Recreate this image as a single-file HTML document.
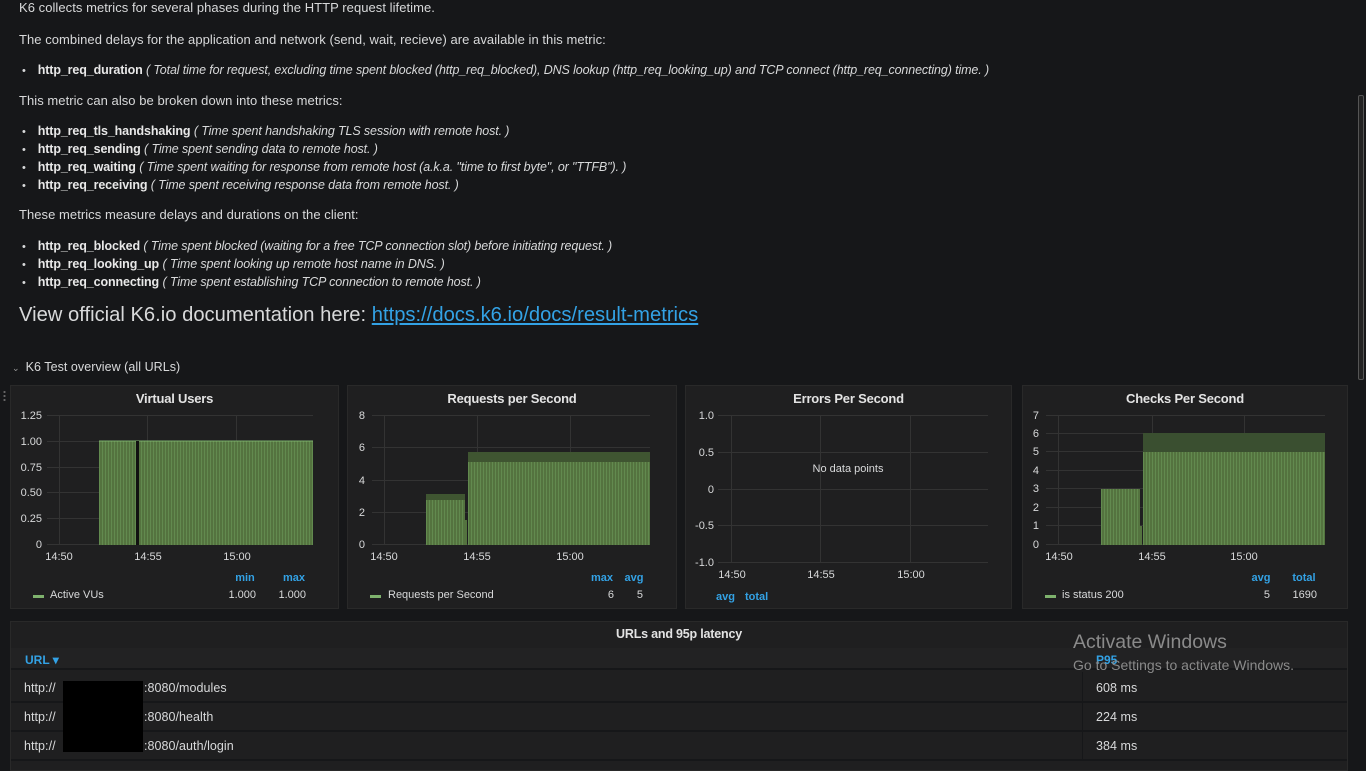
<!DOCTYPE html>
<html><head><meta charset="utf-8"><style>
*{margin:0;padding:0;box-sizing:border-box}
body{width:1366px;height:768px;background:#161719;overflow:hidden;position:relative;font-family:"Liberation Sans",sans-serif;color:#d8d9da;font-size:13px}
.t{position:absolute;left:19px;white-space:nowrap;font-size:13px;letter-spacing:0.05px;line-height:16px}
.li{position:absolute;left:22px;white-space:nowrap;font-size:12.5px;letter-spacing:-0.12px;line-height:16px}
.li:before{content:"•";margin-right:12px;font-size:11px}
.li b{color:#e8e8e8}
.li i{font-style:italic}
.panel{position:absolute;background:#1f1f20;border:1px solid #292929}
.ptitle{position:absolute;top:5px;width:100%;text-align:center;font-weight:bold;font-size:13px;color:#e3e3e3;letter-spacing:-0.2px}
svg text{font-family:"Liberation Sans",sans-serif;font-size:11px;fill:#d8d9da}
.blue{fill:#33a2e5;font-weight:bold}
</style></head><body>
<div class="t" style="top:0">K6 collects metrics for several phases during the HTTP request lifetime.</div>
<div class="t" style="top:32px">The combined delays for the application and network (send, wait, recieve) are available in this metric:</div>
<div class="li" style="top:62px"><b>http_req_duration</b> <i>( Total time for request, excluding time spent blocked (http_req_blocked), DNS lookup (http_req_looking_up) and TCP connect (http_req_connecting) time. )</i></div>
<div class="t" style="top:93px">This metric can also be broken down into these metrics:</div>
<div class="li" style="top:123px"><b>http_req_tls_handshaking</b> <i>( Time spent handshaking TLS session with remote host. )</i></div>
<div class="li" style="top:141px"><b>http_req_sending</b> <i>( Time spent sending data to remote host. )</i></div>
<div class="li" style="top:159px"><b>http_req_waiting</b> <i>( Time spent waiting for response from remote host (a.k.a. "time to first byte", or "TTFB"). )</i></div>
<div class="li" style="top:177px"><b>http_req_receiving</b> <i>( Time spent receiving response data from remote host. )</i></div>
<div class="t" style="top:207px">These metrics measure delays and durations on the client:</div>
<div class="li" style="top:238px"><b>http_req_blocked</b> <i>( Time spent blocked (waiting for a free TCP connection slot) before initiating request. )</i></div>
<div class="li" style="top:256px"><b>http_req_looking_up</b> <i>( Time spent looking up remote host name in DNS. )</i></div>
<div class="li" style="top:274px"><b>http_req_connecting</b> <i>( Time spent establishing TCP connection to remote host. )</i></div>
<div class="t" style="top:303px;font-size:20.2px;line-height:25px;letter-spacing:0">View official K6.io documentation here: <span style="color:#33a2e5;text-decoration:underline">https://docs.k6.io/docs/result-metrics</span></div>
<div style="position:absolute;left:1358px;top:95px;width:6px;height:285px;background:#222;border:1px solid #555;border-radius:2px"></div>
<div class="t" style="top:359px;left:12px;font-size:12.5px"><span style="font-size:9px;color:#999;margin-right:6px">⌄</span>K6 Test overview (all URLs)</div>
<div style="position:absolute;left:3px;top:390px;width:3px;height:12px;background:radial-gradient(circle,#666 1px,transparent 1.2px) 0 0/3px 4px"></div>

<svg width="0" height="0" style="position:absolute"><defs>
<pattern id="st" width="3" height="10" patternUnits="userSpaceOnUse"><rect width="3" height="10" fill="#54733f"/><rect width="1" height="10" fill="#628a4f"/></pattern>
</defs></svg>

<div class="panel" style="left:10px;top:385px;width:329px;height:224px"><div class="ptitle">Virtual Users</div></div>
<div class="panel" style="left:347px;top:385px;width:330px;height:224px"><div class="ptitle">Requests per Second</div></div>
<div class="panel" style="left:685px;top:385px;width:327px;height:224px"><div class="ptitle">Errors Per Second</div></div>
<div class="panel" style="left:1022px;top:385px;width:326px;height:224px"><div class="ptitle">Checks Per Second</div></div>
<div class="panel" style="left:10px;top:621px;width:1338px;height:150px"><div class="ptitle" style="top:5px;font-size:12.5px">URLs and 95p latency</div></div>

<svg style="position:absolute;left:0;top:0" width="1366" height="768">
<g stroke="#333" stroke-width="1">
<line x1="47" y1="415.5" x2="313" y2="415.5"/><line x1="47" y1="441.5" x2="313" y2="441.5"/><line x1="47" y1="467.5" x2="313" y2="467.5"/><line x1="47" y1="492.5" x2="313" y2="492.5"/><line x1="47" y1="518.5" x2="313" y2="518.5"/><line x1="47" y1="544.5" x2="313" y2="544.5"/>
<line x1="59.5" y1="415" x2="59.5" y2="545"/><line x1="147.5" y1="415" x2="147.5" y2="545"/><line x1="236.5" y1="415" x2="236.5" y2="545"/>
</g>
<rect x="99" y="441" width="214" height="104" fill="url(#st)"/>
<rect x="99" y="440" width="214" height="2" fill="#7eb26d" opacity=".5"/>
<rect x="136" y="441" width="3" height="104" fill="#111"/>
<g text-anchor="end"><text x="42" y="419">1.25</text><text x="42" y="445">1.00</text><text x="42" y="471">0.75</text><text x="42" y="496">0.50</text><text x="42" y="522">0.25</text><text x="42" y="548">0</text></g>
<g text-anchor="middle"><text x="59" y="560">14:50</text><text x="148" y="560">14:55</text><text x="237" y="560">15:00</text></g>
<text x="245" y="581" class="blue" text-anchor="middle">min</text><text x="294" y="581" class="blue" text-anchor="middle">max</text>
<rect x="33" y="595" width="11" height="3" fill="#7eb26d"/><text x="50" y="598">Active VUs</text>
<text x="256" y="598" text-anchor="end">1.000</text><text x="306" y="598" text-anchor="end">1.000</text>

<g stroke="#333">
<line x1="372" y1="415.5" x2="650" y2="415.5"/><line x1="372" y1="447.5" x2="650" y2="447.5"/><line x1="372" y1="480.5" x2="650" y2="480.5"/><line x1="372" y1="512.5" x2="650" y2="512.5"/><line x1="372" y1="544.5" x2="650" y2="544.5"/>
<line x1="384.5" y1="415" x2="384.5" y2="545"/><line x1="477.5" y1="415" x2="477.5" y2="545"/><line x1="570.5" y1="415" x2="570.5" y2="545"/>
</g>
<rect x="426" y="496" width="39" height="49" fill="url(#st)"/>
<rect x="468" y="460" width="182" height="85" fill="url(#st)"/>
<rect x="468" y="452" width="182" height="10" fill="#3f5531"/>
<rect x="426" y="494" width="39" height="6" fill="#3f5531"/>
<rect x="464" y="520" width="3" height="25" fill="#54733f"/>
<g text-anchor="end"><text x="365" y="419">8</text><text x="365" y="451">6</text><text x="365" y="484">4</text><text x="365" y="516">2</text><text x="365" y="548">0</text></g>
<g text-anchor="middle"><text x="384" y="560">14:50</text><text x="477" y="560">14:55</text><text x="570" y="560">15:00</text></g>
<text x="602" y="581" class="blue" text-anchor="middle">max</text><text x="634" y="581" class="blue" text-anchor="middle">avg</text>
<rect x="370" y="595" width="11" height="3" fill="#7eb26d"/><text x="388" y="598">Requests per Second</text>
<text x="614" y="598" text-anchor="end">6</text><text x="643" y="598" text-anchor="end">5</text>

<g stroke="#333">
<line x1="718" y1="415.5" x2="988" y2="415.5"/><line x1="718" y1="452.5" x2="988" y2="452.5"/><line x1="718" y1="489.5" x2="988" y2="489.5"/><line x1="718" y1="525.5" x2="988" y2="525.5"/><line x1="718" y1="562.5" x2="988" y2="562.5"/>
<line x1="731.5" y1="415" x2="731.5" y2="563"/><line x1="820.5" y1="415" x2="820.5" y2="563"/><line x1="910.5" y1="415" x2="910.5" y2="563"/>
</g>
<g text-anchor="end"><text x="714" y="419">1.0</text><text x="714" y="456">0.5</text><text x="714" y="493">0</text><text x="714" y="529">-0.5</text><text x="714" y="566">-1.0</text></g>
<text x="848" y="472" text-anchor="middle">No data points</text>
<g text-anchor="middle"><text x="732" y="578">14:50</text><text x="821" y="578">14:55</text><text x="911" y="578">15:00</text></g>
<text x="716" y="600" class="blue">avg</text><text x="745" y="600" class="blue">total</text>

<g stroke="#333">
<line x1="1046" y1="415.5" x2="1325" y2="415.5"/><line x1="1046" y1="433.5" x2="1325" y2="433.5"/><line x1="1046" y1="451.5" x2="1325" y2="451.5"/><line x1="1046" y1="470.5" x2="1325" y2="470.5"/><line x1="1046" y1="488.5" x2="1325" y2="488.5"/><line x1="1046" y1="507.5" x2="1325" y2="507.5"/><line x1="1046" y1="525.5" x2="1325" y2="525.5"/><line x1="1046" y1="544.5" x2="1325" y2="544.5"/>
<line x1="1058.5" y1="415" x2="1058.5" y2="545"/><line x1="1152.5" y1="415" x2="1152.5" y2="545"/><line x1="1244.5" y1="415" x2="1244.5" y2="545"/>
</g>
<rect x="1101" y="489" width="39" height="56" fill="url(#st)"/>
<rect x="1143" y="452" width="182" height="93" fill="url(#st)"/>
<rect x="1143" y="433" width="182" height="19" fill="#3a4f30"/>
<rect x="1140" y="526" width="2" height="19" fill="#54733f"/>
<g text-anchor="end"><text x="1039" y="419">7</text><text x="1039" y="437">6</text><text x="1039" y="455">5</text><text x="1039" y="474">4</text><text x="1039" y="492">3</text><text x="1039" y="511">2</text><text x="1039" y="529">1</text><text x="1039" y="548">0</text></g>
<g text-anchor="middle"><text x="1059" y="560">14:50</text><text x="1152" y="560">14:55</text><text x="1244" y="560">15:00</text></g>
<text x="1261" y="581" class="blue" text-anchor="middle">avg</text><text x="1304" y="581" class="blue" text-anchor="middle">total</text>
<rect x="1045" y="595" width="11" height="3" fill="#7eb26d"/><text x="1062" y="598">is status 200</text>
<text x="1270" y="598" text-anchor="end">5</text><text x="1317" y="598" text-anchor="end">1690</text>
</svg>

<div style="position:absolute;left:11px;top:648px;width:1336px;height:22px;background:#222223;border-bottom:2px solid #161719"></div>
<div style="position:absolute;left:25px;top:653px;font-size:12px;font-weight:bold;color:#33a2e5">URL ▾</div>
<div style="position:absolute;left:1096px;top:653px;font-size:12px;font-weight:bold;color:#33a2e5">P95</div>
<div style="position:absolute;left:11px;top:701px;width:1336px;height:2px;background:#161719"></div>
<div style="position:absolute;left:11px;top:730px;width:1336px;height:2px;background:#161719"></div>
<div style="position:absolute;left:11px;top:759px;width:1336px;height:2px;background:#161719"></div>
<div style="position:absolute;left:1082px;top:672px;width:1px;height:88px;background:#161719"></div>
<div class="t" style="left:24px;top:680px;font-size:12.5px">http://</div>
<div class="t" style="left:24px;top:709px;font-size:12.5px">http://</div>
<div class="t" style="left:24px;top:738px;font-size:12.5px">http://</div>
<div class="t" style="left:144px;top:680px;font-size:12.5px">:8080/modules</div>
<div class="t" style="left:144px;top:709px;font-size:12.5px">:8080/health</div>
<div class="t" style="left:144px;top:738px;font-size:12.5px">:8080/auth/login</div>
<div style="position:absolute;left:63px;top:681px;width:80px;height:71px;background:#000"></div>
<div class="t" style="left:1096px;top:680px;font-size:12.5px">608 ms</div>
<div class="t" style="left:1096px;top:709px;font-size:12.5px">224 ms</div>
<div class="t" style="left:1096px;top:738px;font-size:12.5px">384 ms</div>
<div style="position:absolute;left:1073px;top:631px;font-size:19.5px;color:#8a8a8a;white-space:nowrap">Activate Windows</div>
<div style="position:absolute;left:1073px;top:657px;font-size:14px;color:#8a8a8a;white-space:nowrap">Go to Settings to activate Windows.</div>
</body></html>
